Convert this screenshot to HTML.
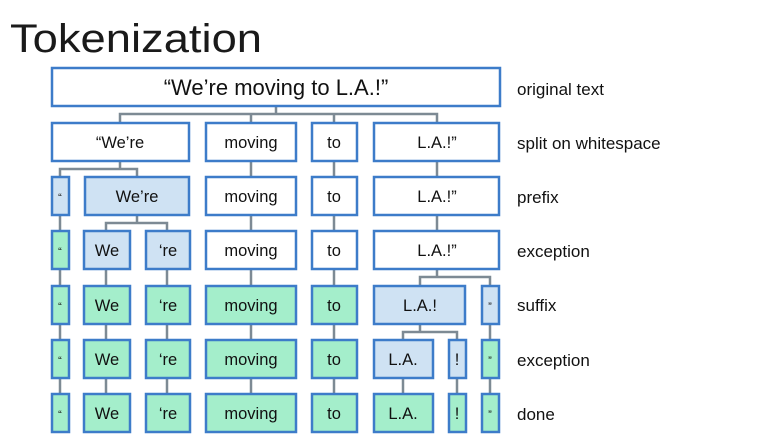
<!DOCTYPE html>
<html><head><meta charset="utf-8"><style>
html,body{margin:0;padding:0;background:#fff;width:768px;height:447px;overflow:hidden}
svg text{font-family:"Liberation Sans",sans-serif;fill:#111}
</style></head><body>
<svg width="768" height="447" xmlns="http://www.w3.org/2000/svg">
<text x="10" y="52" font-size="40" textLength="252" lengthAdjust="spacingAndGlyphs" style="fill:#1a1a1a">Tokenization</text>
<g stroke="#7d8a94" stroke-width="2.5" fill="none">
<path d="M276 107V114M120 122V114H437V122M251 114V122M334 114V122"/>
<path d="M120 162V169M60 177V169H137V177M251 162V177M334 162V177M437 162V177"/>
<path d="M60 216V231M137 216V223M106 231V223H167V231M251 216V231M334 216V231M437 216V231"/>
<path d="M60 270V286M106 270V286M167 270V286M251 270V286M334 270V286M437 270V277M420 286V277H490V286"/>
<path d="M60 325V340M106 325V340M167 325V340M251 325V340M334 325V340M420 325V332M403 340V332H457V340M490 325V340"/>
<path d="M60 379V394M106 379V394M167 379V394M251 379V394M334 379V394M403 379V394M457 379V394M490 379V394"/>
</g>
<g stroke="#3d7cc9" stroke-width="2.5">
<rect x="52" y="68" width="448" height="38" fill="#fff"/>
<rect x="52" y="123" width="137" height="38" fill="#fff"/>
<rect x="206" y="123" width="90" height="38" fill="#fff"/>
<rect x="312" y="123" width="45" height="38" fill="#fff"/>
<rect x="374" y="123" width="125" height="38" fill="#fff"/>
<rect x="52" y="177" width="17" height="38" fill="#cfe2f3"/>
<rect x="85" y="177" width="104" height="38" fill="#cfe2f3"/>
<rect x="206" y="177" width="90" height="38" fill="#fff"/>
<rect x="312" y="177" width="45" height="38" fill="#fff"/>
<rect x="374" y="177" width="125" height="38" fill="#fff"/>
<rect x="52" y="231" width="17" height="38" fill="#a4eecb"/>
<rect x="84" y="231" width="46" height="38" fill="#cfe2f3"/>
<rect x="146" y="231" width="44" height="38" fill="#cfe2f3"/>
<rect x="206" y="231" width="90" height="38" fill="#fff"/>
<rect x="312" y="231" width="45" height="38" fill="#fff"/>
<rect x="374" y="231" width="125" height="38" fill="#fff"/>
<rect x="52" y="286" width="17" height="38" fill="#a4eecb"/>
<rect x="84" y="286" width="46" height="38" fill="#a4eecb"/>
<rect x="146" y="286" width="44" height="38" fill="#a4eecb"/>
<rect x="206" y="286" width="90" height="38" fill="#a4eecb"/>
<rect x="312" y="286" width="45" height="38" fill="#a4eecb"/>
<rect x="374" y="286" width="91" height="38" fill="#cfe2f3"/>
<rect x="482" y="286" width="17" height="38" fill="#cfe2f3"/>
<rect x="52" y="340" width="17" height="38" fill="#a4eecb"/>
<rect x="84" y="340" width="46" height="38" fill="#a4eecb"/>
<rect x="146" y="340" width="44" height="38" fill="#a4eecb"/>
<rect x="206" y="340" width="90" height="38" fill="#a4eecb"/>
<rect x="312" y="340" width="45" height="38" fill="#a4eecb"/>
<rect x="374" y="340" width="59" height="38" fill="#cfe2f3"/>
<rect x="449" y="340" width="17" height="38" fill="#cfe2f3"/>
<rect x="482" y="340" width="17" height="38" fill="#a4eecb"/>
<rect x="52" y="394" width="17" height="38" fill="#a4eecb"/>
<rect x="84" y="394" width="46" height="38" fill="#a4eecb"/>
<rect x="146" y="394" width="44" height="38" fill="#a4eecb"/>
<rect x="206" y="394" width="90" height="38" fill="#a4eecb"/>
<rect x="312" y="394" width="45" height="38" fill="#a4eecb"/>
<rect x="374" y="394" width="59" height="38" fill="#a4eecb"/>
<rect x="449" y="394" width="17" height="38" fill="#a4eecb"/>
<rect x="482" y="394" width="17" height="38" fill="#a4eecb"/>
</g>
<g text-anchor="middle" font-size="16.5">
<text x="276" y="95" font-size="22">“We’re moving to L.A.!”</text>
<text x="120" y="148">“We’re</text><text x="251" y="148">moving</text><text x="334" y="148">to</text><text x="437" y="148">L.A.!”</text>
<text x="60" y="201" font-size="11">“</text><text x="137" y="202">We’re</text><text x="251" y="202">moving</text><text x="334" y="202">to</text><text x="437" y="202">L.A.!”</text>
<text x="60" y="255" font-size="11">“</text><text x="107" y="256">We</text><text x="168" y="256">‘re</text><text x="251" y="256">moving</text><text x="334" y="256">to</text><text x="437" y="256">L.A.!”</text>
<text x="60" y="310" font-size="11">“</text><text x="107" y="311">We</text><text x="168" y="311">‘re</text><text x="251" y="311">moving</text><text x="334" y="311">to</text><text x="420" y="311">L.A.!</text><text x="490" y="310" font-size="11">”</text>
<text x="60" y="364" font-size="11">“</text><text x="107" y="365">We</text><text x="168" y="365">‘re</text><text x="251" y="365">moving</text><text x="334" y="365">to</text><text x="403" y="365">L.A.</text><text x="457" y="365">!</text><text x="490" y="364" font-size="11">”</text>
<text x="60" y="418" font-size="11">“</text><text x="107" y="419">We</text><text x="168" y="419">‘re</text><text x="251" y="419">moving</text><text x="334" y="419">to</text><text x="403" y="419">L.A.</text><text x="457" y="419">!</text><text x="490" y="418" font-size="11">”</text>
</g>
<g font-size="17">
<text x="517" y="95">original text</text>
<text x="517" y="149">split on whitespace</text>
<text x="517" y="203">prefix</text>
<text x="517" y="257">exception</text>
<text x="517" y="311">suffix</text>
<text x="517" y="366">exception</text>
<text x="517" y="420">done</text>
</g>
</svg>
</body></html>
